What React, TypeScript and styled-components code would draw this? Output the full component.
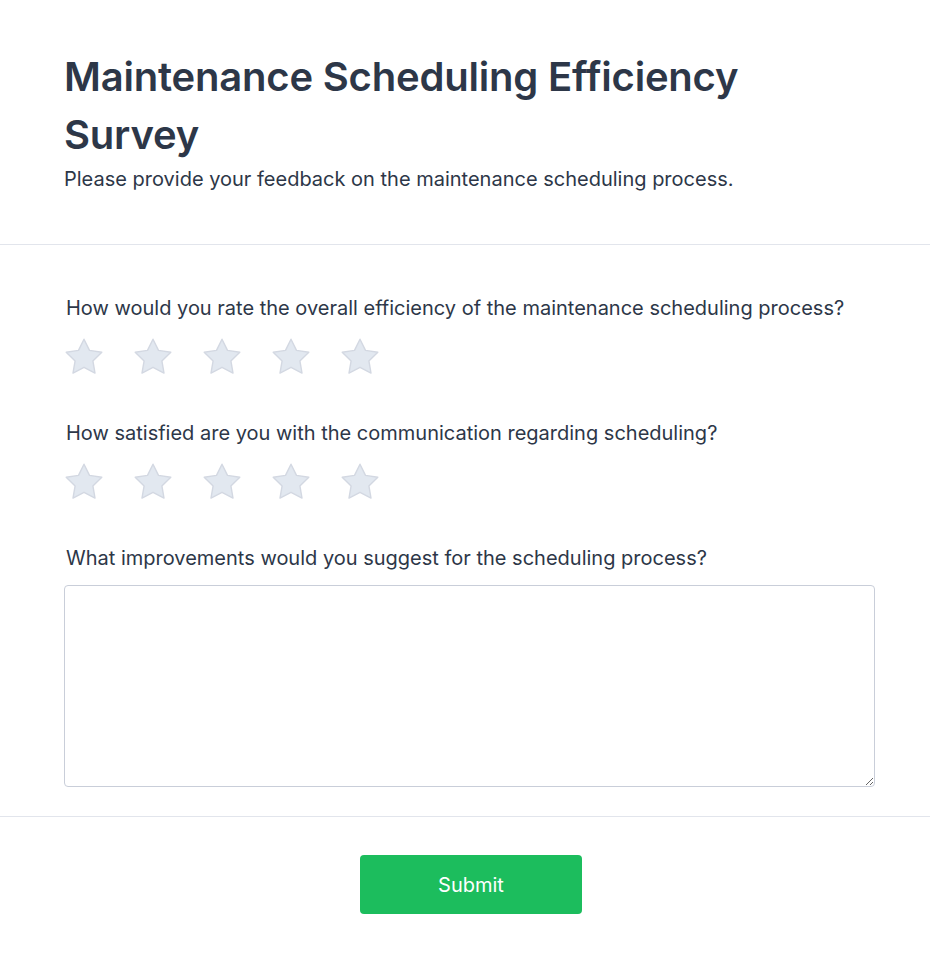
import { FC, useState } from "react";
import styled, { createGlobalStyle } from "styled-components";

const GlobalStyle = createGlobalStyle`
  * { box-sizing: border-box; }
  html, body { overflow-x: hidden; }
  body {
    margin: 0;
    background: #ffffff;
    font-family: Inter, "Noto Sans", sans-serif;
    color: #2d3748;
  }
`;

type StarRowProps = {
  value: number;
  onChange: (v: number) => void;
};

const StarRow: FC<StarRowProps> = ({ value, onChange }) => (
  <Stars>
    {[1, 2, 3, 4, 5].map((n) => (
      <StarButton key={n} onClick={() => onChange(n)} aria-label={`${n} stars`}>
        <svg width="40" height="40" viewBox="2 2 20 20">
          <path
            d="M12 3.1l2.75 5.6 6.15.9-4.45 4.35 1.05 6.1L12 17.15l-5.5 2.9 1.05-6.1L3.1 9.6l6.15-.9z"
            fill={n <= value ? "#f6c945" : "#e2e8f0"}
            stroke={n <= value ? "#ecb92c" : "#d3d8e2"}
            strokeWidth="0.7"
            strokeLinejoin="round"
          />
        </svg>
      </StarButton>
    ))}
  </Stars>
);

const App: FC = () => {
  const [efficiency, setEfficiency] = useState(0);
  const [communication, setCommunication] = useState(0);
  const [suggestion, setSuggestion] = useState("");

  return (
    <Page>
      <GlobalStyle />
      <Header>
        <Title>Maintenance Scheduling Efficiency Survey</Title>
        <Subtitle>Please provide your feedback on the maintenance scheduling process.</Subtitle>
      </Header>
      <Body>
        <Question>
          <Label>How would you rate the overall efficiency of the maintenance scheduling process?</Label>
          <StarRow value={efficiency} onChange={setEfficiency} />
        </Question>
        <Question>
          <Label>How satisfied are you with the communication regarding scheduling?</Label>
          <StarRow value={communication} onChange={setCommunication} />
        </Question>
        <Question $gap={13}>
          <Label>What improvements would you suggest for the scheduling process?</Label>
          <TextArea value={suggestion} onChange={(e) => setSuggestion(e.target.value)} />
        </Question>
      </Body>
      <Footer>
        <SubmitButton type="button">Submit</SubmitButton>
      </Footer>
    </Page>
  );
};

export default App;

const Page = styled.div`
  width: 942px;
  min-height: 963px;
  background: #ffffff;
`;

const Header = styled.div`
  padding: 48px 64px 50px;
  border-bottom: 1px solid #e2e5ec;
`;

const Title = styled.h1`
  margin: 0;
  max-width: 700px;
  font-size: 40px;
  line-height: 58px;
  font-weight: 600;
  letter-spacing: -0.2px;
  color: #2d3748;
`;

const Subtitle = styled.p`
  margin: 0;
  font-size: 20px;
  line-height: 30px;
  font-weight: 400;
  color: #2d3748;
`;

const Body = styled.div`
  padding: 49px 64px 29px;
  display: flex;
  flex-direction: column;
  gap: 42px;
  border-bottom: 1px solid #e2e5ec;
`;

const Question = styled.div<{ $gap?: number }>`
  display: flex;
  flex-direction: column;
  gap: ${({ $gap }) => $gap ?? 15}px;
`;

const Label = styled.label`
  padding-left: 2px;
  font-size: 20px;
  line-height: 28px;
  font-weight: 400;
  color: #2d3748;
`;

const Stars = styled.div`
  display: flex;
  gap: 29px;
`;

const StarButton = styled.button`
  border: none;
  background: none;
  padding: 0;
  width: 40px;
  height: 40px;
  cursor: pointer;
  display: flex;
`;

const TextArea = styled.textarea`
  width: 811px;
  height: 202px;
  border: 1px solid #c9ced9;
  border-radius: 4px;
  padding: 10px 12px;
  font-family: Inter, sans-serif;
  font-size: 18px;
  color: #2d3748;
  resize: vertical;
  outline: none;
`;

const Footer = styled.div`
  display: flex;
  justify-content: center;
  padding: 38px 0 50px;
`;

const SubmitButton = styled.button`
  width: 222px;
  height: 59px;
  border: none;
  border-radius: 4px;
  background: #1cbd5d;
  color: #ffffff;
  font-family: Inter, sans-serif;
  font-size: 20px;
  font-weight: 400;
  cursor: pointer;
`;
